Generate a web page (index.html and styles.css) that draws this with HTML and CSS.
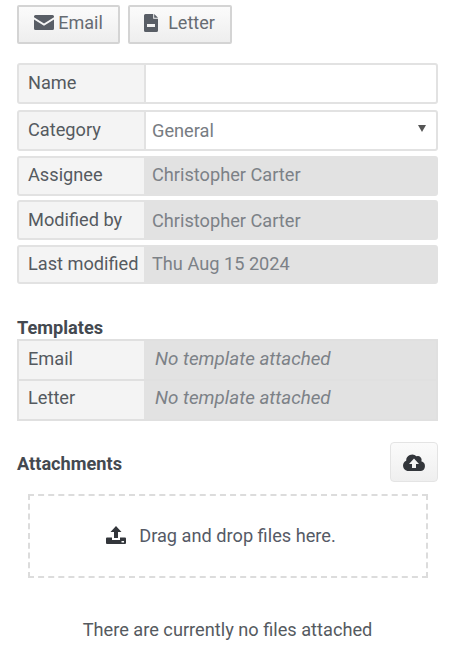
FILE: index.html
```html
<!DOCTYPE html>
<html lang="en">
<head>
    <meta charset="UTF-8">
    <title>Document details</title>
    <link rel="stylesheet" href="styles.css">
</head>
<body>
<div class="actions">
    <button class="btn btn-email">
        <svg class="icon-mail" viewBox="0 0 20 15"><path d="M1.500 0h17A1.500 1.500 0 0 1 20 1.500v.7l-10 6.300L0 2.200v-.7A1.500 1.500 0 0 1 1.500 0z"/><path d="M0 4.400l10 6.300 10-6.300v9.100a1.500 1.500 0 0 1-1.500 1.500h-17A1.500 1.500 0 0 1 0 13.500z"/></svg>
        Email
    </button>
    <button class="btn btn-letter">
        <svg class="icon-file" viewBox="0 0 14 18"><path fill-rule="evenodd" d="M1.500 0H9.200v4.800H14v11.700a1.500 1.500 0 0 1-1.500 1.500h-11A1.500 1.500 0 0 1 0 16.500v-15A1.500 1.500 0 0 1 1.500 0zM3 10v3h8v-3z"/><path d="M10.200 0L14 3.800h-3.800z"/></svg>
        Letter
    </button>
</div>

<div class="fields">
    <div class="field field-name">
        <div class="field-label">Name</div>
        <div class="field-input"></div>
    </div>
    <div class="field field-category">
        <div class="field-label">Category</div>
        <div class="field-input">General<span class="caret"></span></div>
    </div>
    <div class="field field-assignee">
        <div class="field-label">Assignee</div>
        <div class="field-value">Christopher Carter</div>
    </div>
    <div class="field field-modified">
        <div class="field-label">Modified by</div>
        <div class="field-value">Christopher Carter</div>
    </div>
    <div class="field field-last">
        <div class="field-label">Last modified</div>
        <div class="field-value">Thu Aug 15 2024</div>
    </div>
</div>

<h2 class="templates-title">Templates</h2>
<div class="templates">
    <div class="template-row">
        <div class="field-label">Email</div>
        <div class="field-value empty">No template attached</div>
    </div>
    <div class="template-row">
        <div class="field-label">Letter</div>
        <div class="field-value empty">No template attached</div>
    </div>
</div>

<div class="attach-head">
    <h2>Attachments</h2>
    <button class="btn-upload">
        <svg class="icon-cloud" viewBox="0 0 24 17"><path fill-rule="evenodd" d="M19.300 7.300A3.800 3.800 0 0 0 14.500 2.300 6 6 0 0 0 4.200 6.800 5.400 5.400 0 0 0 5.400 17H19a5 5 0 0 0 .3-9.700zM12 4.500l5 5.500h-3v4h-4v-4H7z"/></svg>
    </button>
</div>

<div class="dropzone">
    <svg class="icon-upload" viewBox="0 0 20 18"><path d="M10 0l5.500 6H12v6H8V6H4.500z"/><path fill-rule="evenodd" d="M1 11.500h5V14h8v-2.500h5a1 1 0 0 1 1 1V17a1 1 0 0 1-1 1H1a1 1 0 0 1-1-1v-4.500a1 1 0 0 1 1-1zM15.500 15v1.500H18V15z"/></svg>
    <span>Drag and drop files here.</span>
</div>

<p class="no-files">There are currently no files attached</p>
</body>
</html>
```
FILE: styles.css
```css
* {
    box-sizing: border-box;
}
body {
    margin: 0;
    padding: 5px 21px 0 17px;
    font-family: Roboto, "Liberation Sans", sans-serif;
    font-size: 18.2px;
    color: #555a60;
    background: #fff;
    height: 664px;
    overflow: hidden;
}
.actions {
    display: flex;
    gap: 8px;
}
.btn {
    display: flex;
    align-items: center;
    justify-content: center;
    height: 39px;
    padding: 0 0 4px;
    background: linear-gradient(#fbfbfb, #eeeeee);
    border: 2px solid #d4d4d4;
    border-radius: 2px;
    font: inherit;
    font-size: 18px;
    color: #666b72;
}
.btn-email {
    width: 103px;
    gap: 4px;
}
.btn-letter {
    width: 104px;
    gap: 10px;
    padding-right: 1px;
}
.icon-mail {
    width: 20px;
    height: 15px;
    fill: #595e66;
}
.icon-file {
    width: 14px;
    height: 18px;
    fill: #595e66;
}
.fields {
    margin-top: 19px;
    display: flex;
    flex-direction: column;
}
.field {
    display: flex;
    border: 2px solid #e2e2e2;
    border-radius: 3px;
    background: #e2e2e2;
    overflow: hidden;
}
.field-name {
    height: 41px;
}
.field-category {
    height: 41px;
    margin-top: 6px;
}
.field-assignee {
    height: 40px;
    margin-top: 5px;
}
.field-modified {
    height: 40px;
    margin-top: 4px;
}
.field-last {
    height: 39px;
    margin-top: 5px;
}
.field-label {
    flex: 0 0 125px;
    display: flex;
    align-items: center;
    padding-left: 9px;
    padding-bottom: 3px;
    background: #f4f4f4;
    color: #555a60;
    white-space: nowrap;
}
.field-modified .field-label {
    padding-bottom: 2px;
}
.field-input {
    flex: 1;
    position: relative;
    display: flex;
    align-items: center;
    padding-left: 6px;
    margin-left: 2px;
    background: #fff;
    color: #777c82;
}
.caret {
    position: absolute;
    right: 10px;
    top: 13px;
    border-left: 4px solid transparent;
    border-right: 4px solid transparent;
    border-top: 7px solid #555;
}
.field-value {
    flex: 1;
    display: flex;
    align-items: center;
    padding-left: 8px;
    padding-bottom: 2px;
    color: #7c8187;
    background: #e2e2e2;
}
.field-assignee .field-value {
    padding-bottom: 4px;
}
.field-modified .field-value {
    padding-bottom: 0;
}
.empty {
    font-size: 18.8px;
    font-style: italic;
    padding-left: 11px;
}
.templates-title {
    margin: 33px 0 0;
    font-size: 18.2px;
    line-height: 21px;
    font-weight: 700;
    color: #444950;
}
.templates {
    margin-top: 1px;
    border: 2px solid #e0e0e0;
}
.template-row {
    display: flex;
    height: 38px;
}
.template-row + .template-row {
    height: 40px;
    border-top: 2px solid #e0e0e0;
}
.template-row + .template-row .field-label {
    padding-bottom: 5px;
}
.template-row + .template-row .field-value {
    padding-bottom: 4px;
}
.attach-head {
    display: flex;
    justify-content: space-between;
    align-items: center;
    margin-top: 21px;
}
.attach-head h2 {
    margin: 0;
    padding-top: 2px;
    font-size: 18.2px;
    font-weight: 700;
    color: #444950;
}
.btn-upload {
    display: flex;
    align-items: center;
    justify-content: center;
    width: 48px;
    height: 40px;
    padding: 0;
    background: linear-gradient(#fbfbfb, #efefef);
    border: 1px solid #e4e4e4;
    border-radius: 4px;
}
.icon-cloud {
    width: 24px;
    height: 17px;
    fill: #33363b;
}
.dropzone {
    margin: 12px 10px 0 11px;
    height: 84px;
    display: flex;
    align-items: center;
    justify-content: center;
    gap: 13px;
    padding: 0 14px 2px 0;
    border: 2px dashed #dcdcdc;
    color: #555a66;
}
.icon-upload {
    width: 20px;
    height: 18px;
    fill: #33363b;
}
.no-files {
    margin: 41px 0 0;
    text-align: center;
    color: #555a60;
}
```
